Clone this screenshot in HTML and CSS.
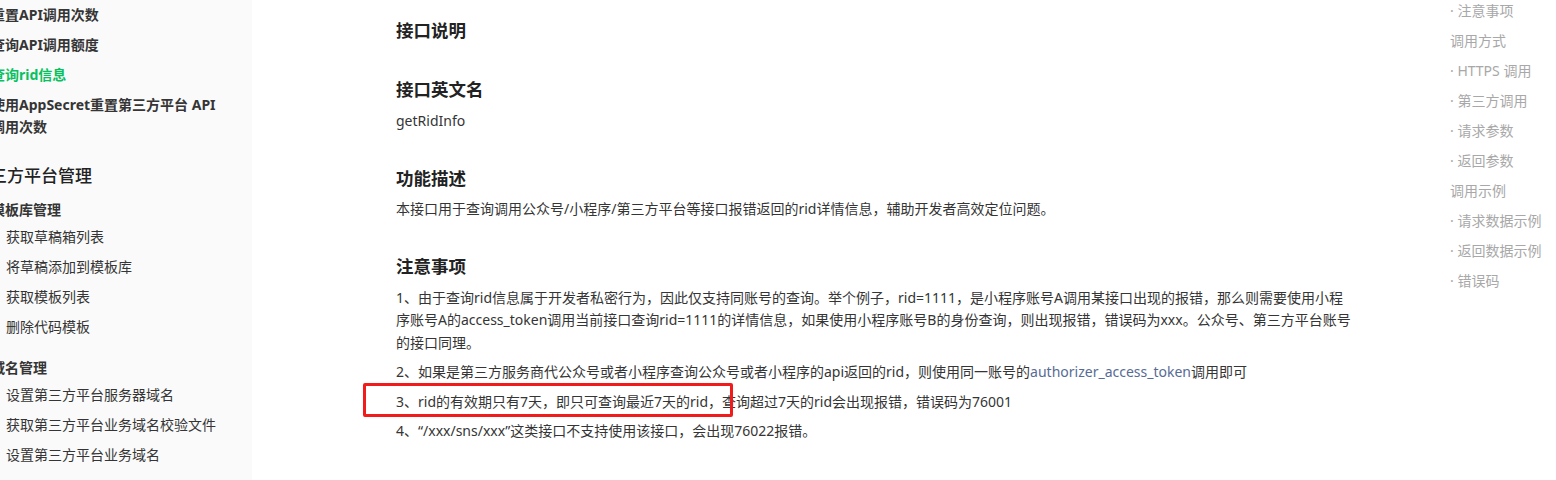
FILE: index.html
```html
<!DOCTYPE html>
<html lang="zh-CN">
<head>
    <meta charset="UTF-8">
    <meta name="viewport" content="width=device-width, initial-scale=1.0">
    <title>查询rid信息 - 开发文档</title>
    <link rel="stylesheet" href="styles.css">
</head>
<body>
    <aside class="sidebar">
        <ul class="nav">
            <li class="nav-item strong">重置API调用次数</li>
            <li class="nav-item strong">查询API调用额度</li>
            <li class="nav-item strong active">查询rid信息</li>
            <li class="nav-item strong">使用AppSecret重置第三方平台 API 调用次数</li>
        </ul>
        <div class="nav-group">三方平台管理</div>
        <div class="nav-sub first">模板库管理</div>
        <ul class="nav">
            <li class="nav-item child">获取草稿箱列表</li>
            <li class="nav-item child">将草稿添加到模板库</li>
            <li class="nav-item child">获取模板列表</li>
            <li class="nav-item child">删除代码模板</li>
        </ul>
        <div class="nav-sub">域名管理</div>
        <ul class="nav">
            <li class="nav-item child">设置第三方平台服务器域名</li>
            <li class="nav-item child">获取第三方平台业务域名校验文件</li>
            <li class="nav-item child">设置第三方平台业务域名</li>
        </ul>
    </aside>

    <main class="content">
        <h2 class="first">接口说明</h2>

        <h2>接口英文名</h2>
        <p>getRidInfo</p>

        <h2>功能描述</h2>
        <p>本接口用于查询调用公众号/小程序/第三方平台等接口报错返回的rid详情信息，辅助开发者高效定位问题。</p>

        <h2>注意事项</h2>
        <p>1、由于查询rid信息属于开发者私密行为，因此仅支持同账号的查询。举个例子，rid=1111，是小程序账号A调用某接口出现的报错，那么则需要使用小程序账号A的access_token调用当前接口查询rid=1111的详情信息，如果使用小程序账号B的身份查询，则出现报错，错误码为xxx。公众号、第三方平台账号的接口同理。</p>
        <p>2、如果是第三方服务商代公众号或者小程序查询公众号或者小程序的api返回的rid，则使用同一账号的<a href="#">authorizer_access_token</a>调用即可</p>
        <p>3、rid的有效期只有7天，即只可查询最近7天的rid，查询超过7天的rid会出现报错，错误码为76001</p>
        <p>4、“/xxx/sns/xxx”这类接口不支持使用该接口，会出现76022报错。</p>
    </main>

    <nav class="toc">
        <div class="toc-item">· 注意事项</div>
        <div class="toc-item">调用方式</div>
        <div class="toc-item">· HTTPS 调用</div>
        <div class="toc-item">· 第三方调用</div>
        <div class="toc-item">· 请求参数</div>
        <div class="toc-item">· 返回参数</div>
        <div class="toc-item">调用示例</div>
        <div class="toc-item">· 请求数据示例</div>
        <div class="toc-item">· 返回数据示例</div>
        <div class="toc-item">· 错误码</div>
    </nav>

    <div class="mark"></div>
</body>
</html>
```

FILE: styles.css
```css
body {
    margin: 0;
    height: 480px;
    overflow: hidden;
    display: flex;
    font-family: "Noto Sans", "Noto Sans CJK SC", sans-serif;
    font-size: 14px;
    color: #353535;
    background: #fff;
}
.sidebar {
    width: 252px;
    flex-shrink: 0;
    background: #fafafa;
}
.nav {
    list-style: none;
    margin: 0 0 0 -9px;
    padding: 0;
    width: 236px;
}
.nav-item {
    line-height: 22px;
    padding: 4px 0;
}
.nav-item.strong {
    font-weight: bold;
    color: #353535;
}
.nav-item.active {
    color: #07c160;
}
.nav-item.child {
    padding-left: 15px;
    color: #353535;
}
.nav-group {
    margin: 22px 0 0 -10px;
    font-size: 17px;
    line-height: 24px;
    font-weight: 500;
    color: #222;
}
.nav-sub {
    margin: 11px 0 0 -9px;
    padding: 4px 0 1px;
    line-height: 22px;
    font-weight: bold;
    color: #353535;
}
.nav-sub.first {
    margin-top: 7px;
}
.content {
    flex: 1;
    padding-left: 144px;
}
.content h2 {
    margin: 33.5px 0 8.5px;
    font-size: 17.5px;
    line-height: 24px;
    font-weight: bold;
    color: #222;
    width: 955px;
}
.content h2.first {
    margin: 18px 0 35px;
}
.content p {
    margin: 0 0 7px;
    line-height: 22.5px;
    width: 955px;
}
.content a {
    color: #576b95;
    text-decoration: none;
}
.toc {
    width: 106px;
    flex-shrink: 0;
    margin-top: -4px;
}
.toc-item {
    line-height: 22px;
    padding: 4px 0;
    color: #a8a8a8;
    white-space: nowrap;
}
.mark {
    position: absolute;
    left: 363px;
    top: 383px;
    width: 364px;
    height: 28px;
    border: 3px solid #f21b1b;
    border-radius: 2px;
}
```
